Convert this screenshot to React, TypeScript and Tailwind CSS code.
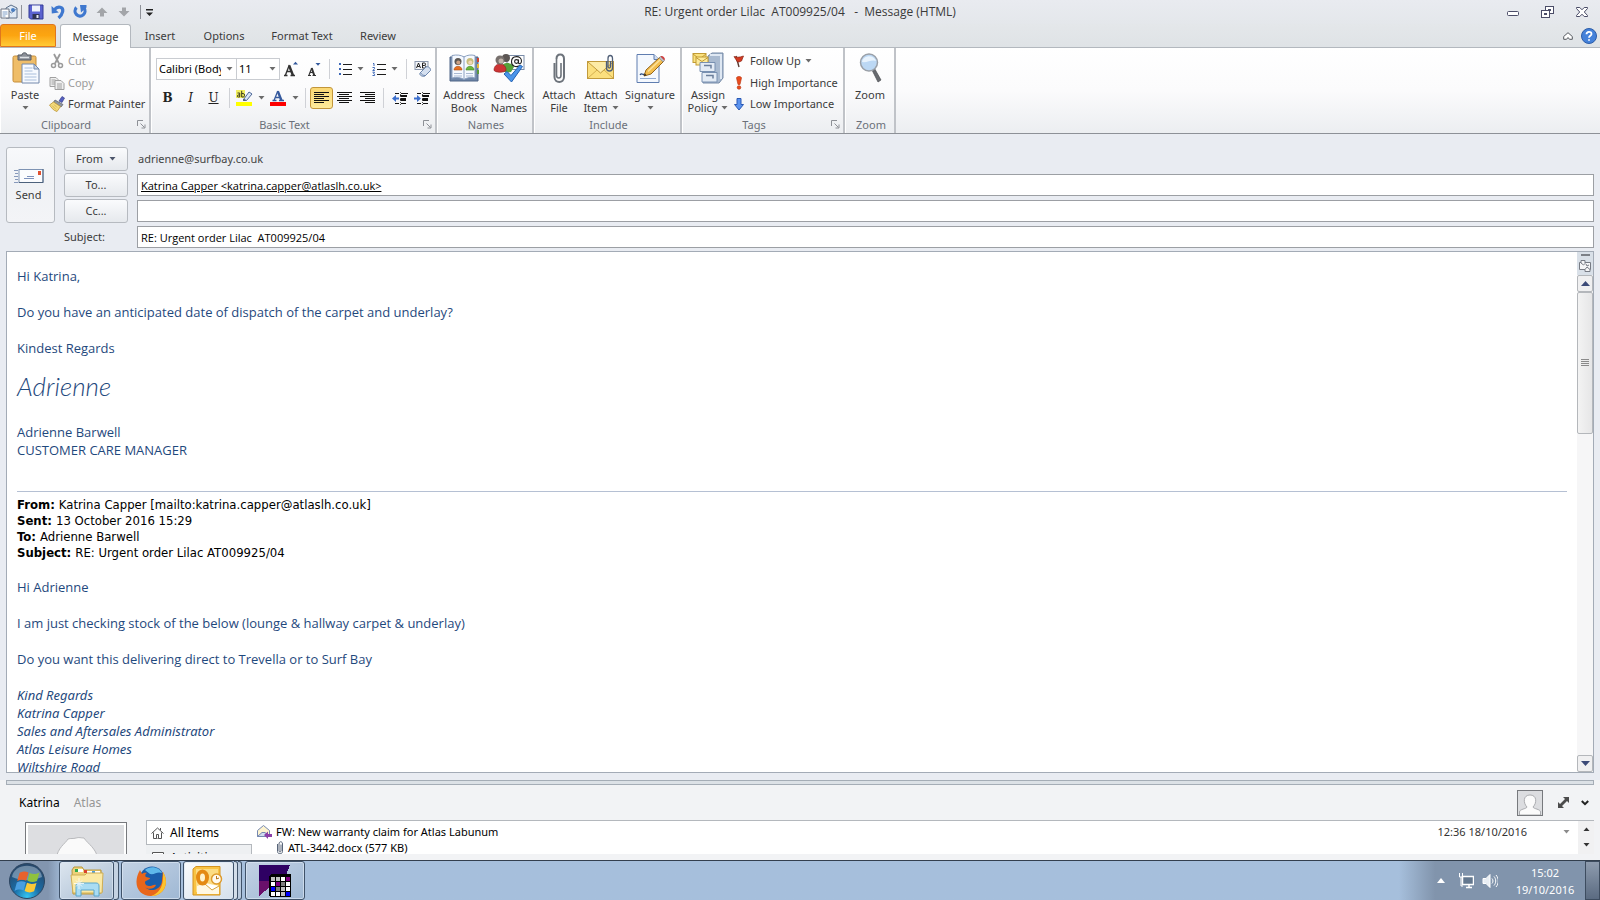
import type { ReactNode } from "react";
import clsx from "clsx";

type IconProps = { className?: string };

const Caret = ({ className = "text-[#6b6b6b]" }: IconProps) => (
  <svg viewBox="0 0 7 4" className={clsx("h-[4px] w-[7px] shrink-0", className)} aria-hidden="true">
    <path d="M0.5 0h6L3.5 3.6z" fill="currentColor" />
  </svg>
);

/* ---------- quick access icons ---------- */

const AppIcon = () => (
  <svg viewBox="0 0 18 16" className="h-4 w-[18px]">
    <path d="M6 4 11 1l6 3v10H6z" fill="#dfe9f5" stroke="#5c6f88" />
    <path d="M6 5l5.500 4L17 4.500" fill="none" stroke="#6d86a8" />
    <path d="M1 5h8v9H1z" fill="#fff" stroke="#6c7583" />
    <path d="M2.500 8h5M2.500 10h5M2.500 12h3" stroke="#7f9fc8" />
    <circle cx="13" cy="6" r="2" fill="#4a7ec0" />
  </svg>
);

const SaveIcon = () => (
  <svg viewBox="0 0 16 16" className="size-4">
    <path d="M1 1h14v14H2.500L1 13.500z" fill="#5a62cf" stroke="#333b96" />
    <path d="M4 1.500h8v6H4z" fill="#eef2fb" />
    <path d="M4.500 10h7v5h-7z" fill="#2f3452" />
    <path d="M8.500 11h2v3h-2z" fill="#e6e9f5" />
  </svg>
);

const UndoIcon = () => (
  <svg viewBox="0 0 16 16" className="size-4">
    <path d="M4.500 5.500C8 1.500 13.500 3 12.700 7.500c-.5 2.800-2.200 4.800-4.200 6.500" fill="none" stroke="#3f78cf" strokeWidth="3.200" />
    <path d="M1.500 2l.3 7.500 7-1z" fill="#3f78cf" />
  </svg>
);

const RedoIcon = () => (
  <svg viewBox="0 0 16 16" className="size-4">
    <path d="M4.500 3.500a5 5 0 1 0 7.500.5" fill="none" stroke="#3f78cf" strokeWidth="3.200" />
    <path d="M8 1h6.500v2.500L9 8.500z" fill="#3f78cf" />
  </svg>
);

const GrayArrow = ({ down = false }: { down?: boolean }) => (
  <svg viewBox="0 0 12 10" className={clsx("h-[10px] w-3", down && "rotate-180")}>
    <path d="M6 .5 11.500 6H8v3.500H4V6H.5z" fill="#a3a5a9" />
  </svg>
);

/* ---------- ribbon icons ---------- */

const PasteIcon = () => (
  <svg viewBox="0 0 32 32" className="size-8">
    <rect x="4" y="4" width="23" height="26" rx="1.500" fill="#efbd68" stroke="#c58d38" />
    <path d="M9 3h4c0-3 5-3 5 0h4v5H9z" fill="#8b9098" stroke="#555b64" />
    <path d="M11 5.500h9" stroke="#dfe2e6" strokeWidth="1.500" />
    <path d="M13 12h12l5 5v14H13z" fill="#f7faff" stroke="#7288ab" />
    <path d="M25 12v5h5z" fill="#c9d7ea" stroke="#7288ab" />
    <path d="M15.500 16h8M15.500 19h8M15.500 22h12M15.500 25h12M15.500 28h12" stroke="#a9bedb" />
  </svg>
);

const CutIcon = () => (
  <svg viewBox="0 0 16 16" className="size-4" fill="none" stroke="#9a9a9a">
    <path d="M5 1l5 9.500M11 1L6 10.500" strokeWidth="1.800" />
    <circle cx="4.500" cy="12.500" r="2" strokeWidth="1.500" />
    <circle cx="11.500" cy="12.500" r="2" strokeWidth="1.500" />
  </svg>
);

const CopyIcon = () => (
  <svg viewBox="0 0 16 16" className="size-4" fill="#efefef" stroke="#a0a0a0">
    <path d="M1 2.500h6l2 2v7H1z" />
    <path d="M2.500 5h4M2.500 7h4M2.500 9h4" />
    <path d="M6 5.500h6l3 3v6H6z" />
    <path d="M8 9h5M8 11h5M8 13h5" />
  </svg>
);

const PainterIcon = () => (
  <svg viewBox="0 0 16 16" className="size-4">
    <path d="M10 5l3-4.500L15.500 2 13 6.500z" fill="#5560c0" stroke="#39418b" strokeWidth=".7" />
    <path d="M6 4l8 4.500-2 2.500-8-4z" fill="#8e959f" stroke="#535a64" strokeWidth=".7" />
    <path d="M4.500 6L11.500 10.500 8 15.500C4 14.500 2 11 .5 9z" fill="#f5dc7d" stroke="#bb9433" strokeWidth=".8" />
    <path d="M3 9.500l4 4M5 8.500l3 3" stroke="#c8a344" strokeWidth=".7" />
  </svg>
);

const GrowFont = () => (
  <svg viewBox="0 0 16 16" className="size-4">
    <path d="M1 14.500h3.500M7.500 14.500h4.500M2.500 14L6.300 4M5.800 4l4 10.500M4 10.500h4.500" stroke="#333" strokeWidth="1.400" fill="none" />
    <path d="M6.200 4.500l3.800 10" stroke="#333" strokeWidth="2.400" />
    <path d="M10 3.500h5L12.500.8z" fill="#33599c" />
  </svg>
);

const ShrinkFont = () => (
  <svg viewBox="0 0 16 16" className="size-4">
    <path d="M2 14.500h3M6.500 14.500H10M3 14l2.800-7M4 11.500h4" stroke="#333" strokeWidth="1.200" fill="none" />
    <path d="M5.700 7l2.600 7.500" stroke="#333" strokeWidth="2" />
    <path d="M9.500 2h5L12 4.700z" fill="#33599c" />
  </svg>
);

const BulletsIcon = () => (
  <svg viewBox="0 0 14 14" className="size-[14px]" shapeRendering="crispEdges">
    <path d="M5 2.500h9M5 7.500h9M5 12.500h9" stroke="#1d1d1d" />
    <path d="M1 1h2v2H1zM1 6h2v2H1zM1 11h2v2H1z" fill="#3c67b8" />
  </svg>
);

const NumberingIcon = () => (
  <svg viewBox="0 0 14 14" className="size-[14px]">
    <path d="M5 2.500h9M5 7.500h9M5 12.500h9" stroke="#1d1d1d" shapeRendering="crispEdges" />
    <path d="M1 1.500h1V4M.5 5.500h2v1.200L.8 8.500h2M.5 10.200h2L1.600 11.700l1 .6v1.200H.5" fill="none" stroke="#3c67b8" />
  </svg>
);

const ClearFormatIcon = () => (
  <svg viewBox="0 0 18 16" className="h-4 w-[18px]">
    <rect x="1" y=".5" width="13" height="8" fill="#f4f6fa" stroke="#8b98ad" />
    <path d="M2.500 7L4.500 2l2 5M3.200 5.500h2.600M8.500 2v5h2.200c1.600 0 1.600-2.500 0-2.500H8.500M8.500 2h2c1.400 0 1.400 2.300 0 2.300" fill="none" stroke="#222" />
    <path d="M6 12l6-6c2-1 5 1 4.500 3.500L11 15c-3 1-6-1-5-3z" fill="#d5e0f0" stroke="#6b85ad" />
    <path d="M6.500 11.500c1 2 2.500 3 4.500 3" fill="none" stroke="#6b85ad" />
  </svg>
);

const HighlightIcon = () => (
  <svg viewBox="0 0 17 16" className="h-4 w-[17px]">
    <rect x="0" y="0" width="9" height="8" fill="#f2ef5e" />
    <path d="M1.500 3h2.200v4M3.700 5H2.200C1 5.300 1 7 2.300 7h1.400M5.700.8V7h1.500C9 7 9 3.500 7.200 3.500H5.700" fill="none" stroke="#3a3a1e" />
    <path d="M7.500 9.500L13 2l3 2-5.500 6.500z" fill="#dbe6f5" stroke="#4d6798" />
    <path d="M7 11l.5-2 3 1.500z" fill="#3b4b66" />
    <rect x="0" y="12" width="16" height="4" fill="#ffff00" />
  </svg>
);

const FontColorIcon = () => (
  <svg viewBox="0 0 17 16" className="h-4 w-[17px]">
    <path d="M2.500 10.500h4M9 10.500h5M4 10.500L7.800 1M5.500 7.500h5" fill="none" stroke="#35599d" strokeWidth="1.300" />
    <path d="M7.800 1.200l3.700 9.300" stroke="#35599d" strokeWidth="2.400" />
    <rect x="0" y="12" width="16" height="4" fill="#fe0000" />
  </svg>
);

const AlignIcon = ({ d }: { d: string }) => (
  <svg viewBox="0 0 15 13" className="h-[13px] w-[15px]" shapeRendering="crispEdges">
    <path d={d} stroke="#111" />
  </svg>
);

const IndentIcon = ({ out = false }: { out?: boolean }) => (
  <svg viewBox="0 0 16 13" className="h-[13px] w-4" shapeRendering="crispEdges">
    <path d="M3 1.500h4M9 1.500h7M9 4.500h4M9 8.500h5M3 11.500h4M9 11.500h5" stroke="#111" />
    <path d="M8 3.500h7M8 6.500h6" stroke="#111" strokeWidth="2" />
    <path d="M8.500 0v13" stroke="#555" strokeDasharray="1 1" />
    <path d={out ? "M0 6.500L4 3v2.500h3v2H4V10z" : "M7 6.500L3 3v2.500H0v2h3V10z"} fill="#3c6fce" shapeRendering="auto" />
  </svg>
);

const AddressBookIcon = () => (
  <svg viewBox="0 0 32 32" className="size-8">
    <path d="M2 5h28v24H2z" fill="#6f86a8" stroke="#4e6486" />
    <path d="M4 3.500c5-1 9-.5 12 1.500 3-2 7-2.500 11-1.500V26c-4-1-8-.5-11 1.500-3-2-7-2.500-12-1.500z" fill="#f5f9ff" stroke="#8ba0c0" />
    <path d="M16 5v22" stroke="#8ba0c0" />
    <path d="M6 18c0-5 8-5 8 0z" fill="#e56f22" stroke="#a84a10" strokeWidth=".6" />
    <circle cx="10" cy="9.500" r="3.500" fill="#5b5652" />
    <circle cx="10.300" cy="10.500" r="2" fill="#caa084" />
    <path d="M18 18c0-5 8-5 8 0z" fill="#6cb63c" stroke="#3f8321" strokeWidth=".6" />
    <circle cx="22" cy="9.500" r="3.500" fill="#c9bd7a" />
    <circle cx="22.300" cy="10.500" r="2" fill="#f0d6b6" />
    <path d="M6 21.500h8M6 24h8M18 21.500h7M18 24h7" stroke="#a9b9d2" />
    <path d="M29 6h2v4h-2z" fill="#d0432f" />
    <path d="M29 12h2v4h-2z" fill="#e6b93b" />
    <path d="M29 18h2v4h-2z" fill="#5b9a3b" />
  </svg>
);

const CheckNamesIcon = () => (
  <svg viewBox="0 0 32 32" className="size-8">
    <rect x="14" y="3.500" width="17" height="14" fill="#fff" stroke="#7b8da9" />
    <path d="M8 17c0-8 12-7 13-2l-3 5c-4 1-8 0-10-3z" fill="#55a23b" />
    <circle cx="13" cy="6" r="4" fill="#5c5654" />
    <path d="M1 18c0-8 12-8 12 0 0 3-12 3-12 0z" fill="#cd3434" stroke="#8f1d1d" strokeWidth=".6" />
    <circle cx="7" cy="8" r="4.500" fill="#77706d" />
    <circle cx="8" cy="9" r="2.500" fill="#c2b5ab" />
    <circle cx="23.500" cy="9.500" r="1.900" fill="none" stroke="#222" strokeWidth="1.100" />
    <path d="M25.500 7.500v3c0 2 3 1.500 3-1.500 0-6-10-6-10 .8 0 5 5 5.500 8 4" fill="none" stroke="#222" strokeWidth="1.100" />
    <path d="M11 22l3-2.500 4 4L27 13l2.500 1.500L18.500 30z" fill="#4b95ea" stroke="#2362b4" />
  </svg>
);

const AttachFileIcon = () => (
  <svg viewBox="0 0 32 32" className="size-8" fill="none" stroke="#6d737b">
    <path d="M11.500 11v14c0 6.500 9.500 6.500 9.500 0V7c0-6-7.500-6-7.500 0" strokeWidth="2" />
    <path d="M13.500 7v16c0 4 4.500 4 4.500 0V11" strokeWidth="1.600" />
  </svg>
);

const AttachItemIcon = () => (
  <svg viewBox="0 0 32 32" className="size-8">
    <rect x="2.500" y="9.500" width="26" height="17" fill="#fbdf7e" stroke="#c19a3c" />
    <path d="M3 26l9-8M28 26l-9-8" stroke="#d5b050" />
    <path d="M3 10l12.500 11L28 10" fill="#fdeba6" stroke="#c19a3c" />
    <path d="M21.500 9v7c0 4 6 4 6 0V6.500c0-4-4.500-4-4.500 0v8c0 2 2.500 2 2.500 0V9" fill="none" stroke="#4f5e76" strokeWidth="1.300" />
  </svg>
);

const SignatureIcon = () => (
  <svg viewBox="0 0 32 32" className="size-8">
    <path d="M3 2.500h17l5 5v23H3z" fill="#f4f8fe" stroke="#5f7db0" />
    <path d="M20 2.500v5h5" fill="#d0def2" stroke="#5f7db0" />
    <path d="M6 26.500h16" stroke="#90aad3" />
    <path d="M6 23c2-3 3 1 5-1" fill="none" stroke="#27487f" strokeWidth="1.300" />
    <path d="M10 24l2-6L26 5l4 4-13 13z" fill="#f2bd4e" stroke="#94651c" />
    <path d="M14 19.500L27.500 6.500" stroke="#fbe29c" strokeWidth="1.500" />
    <path d="M25 6l1.500-1.500 4 4L29 10z" fill="#b8bec7" stroke="#777" strokeWidth=".5" />
    <path d="M26.500 4.500C28 3 32 6 30.500 8.500z" fill="#cf4040" />
    <path d="M10 24l.8-2.500 1.800 1.800z" fill="#222" />
  </svg>
);

const AssignPolicyIcon = () => (
  <svg viewBox="0 0 32 32" className="size-8">
    <path d="M16 4l4-3h11v25l-4 5H11V12h5z" fill="#a9bad0" stroke="#7489a6" />
    <path d="M18 3h11v24" fill="none" stroke="#dfe8f3" strokeWidth="2" />
    <rect x="1" y="1.500" width="13" height="9" fill="#fbe27f" stroke="#c29b35" />
    <path d="M1 2l6.500 5L14 2" fill="none" stroke="#c29b35" />
    <rect x="4" y="5" width="12" height="8" fill="#fdeb9c" stroke="#c29b35" />
    <path d="M4 5.500l6 4 6-4" fill="none" stroke="#c29b35" />
    <path d="M8 10.500h15v9H8z" fill="#e3ebf5" stroke="#7890b1" />
    <path d="M10 20.500h15v9.500H10z" fill="#e3ebf5" stroke="#7890b1" />
    <path d="M12 13.500h7v3M14 23.500h7v3" fill="none" stroke="#6b7f9c" strokeWidth="1.500" />
  </svg>
);

const ZoomIcon = () => (
  <svg viewBox="0 0 32 32" className="size-8">
    <path d="M18 18l2.500-1.500L27 28l-3 2z" fill="#686b70" stroke="#4b4d52" strokeWidth=".7" />
    <circle cx="15" cy="10.500" r="8.500" fill="#bcd8f4" stroke="#9aa0a8" strokeWidth="1.500" />
    <path d="M8 10c1-7 12-8 14-1-4-2-9 2-14 1z" fill="#e8f3fd" />
  </svg>
);

const FlagIcon = () => (
  <svg viewBox="0 0 12 14" className="mr-[2px] h-[14px] w-3">
    <path d="M3 2l3 11" stroke="#5a3a32" strokeWidth="1.400" />
    <path d="M1 2.500C4 3.500 6 3.500 10.500 2L8.500 7C7 8 5 8 4.500 8z" fill="#d23a22" stroke="#8d2313" strokeWidth=".7" />
  </svg>
);

const HighIcon = () => (
  <svg viewBox="0 0 12 14" className="mr-[2px] h-[14px] w-3">
    <path d="M3.500 2c0-2 5-2 5 0L7 8.500H5z" fill="#ea4b1c" stroke="#b5330e" strokeWidth=".6" />
    <circle cx="6" cy="11.500" r="1.800" fill="#ea4b1c" stroke="#b5330e" strokeWidth=".6" />
  </svg>
);

const LowIcon = () => (
  <svg viewBox="0 0 12 14" className="mr-[2px] h-[14px] w-3">
    <path d="M4 1.500h4v6h2.500L6 13 1.500 7.500H4z" fill="#5b93ee" stroke="#2a59b5" />
  </svg>
);

/* ---------- ribbon building blocks ---------- */

const Launcher = () => (
  <button type="button" aria-label="More options" className="-ml-2 size-[10px]">
    <svg viewBox="0 0 9 9" className="size-[9px]" fill="none" stroke="#8d9096">
      <path d="M.5 6V.5H6M3.500 3.500l4 4M8 4.500V8H4.500" />
    </svg>
  </button>
);

function Group({ label, width, launcher, children }: { label: string; width: string; launcher?: boolean; children: ReactNode }) {
  return (
    <section className={clsx("flex flex-col border-r-2 border-[#c0c3c8] border-l border-l-white", width)}>
      <div className="flex h-[67px]">{children}</div>
      <div className={clsx("flex h-[18px] items-center", launcher ? "pr-[2px]" : "pl-[2px]")}>
        <h2 className={clsx("flex-1 pt-px text-center text-[#6b7079]", launcher && "pr-[14px]")}>{label}</h2>
        {launcher && <Launcher />}
      </div>
    </section>
  );
}

function BigButton({ icon, label, second, caret, width }: { icon: ReactNode; label: string; second?: string; caret?: boolean; width: string }) {
  return (
    <button type="button" className={clsx("flex shrink-0 flex-col items-center pt-1 leading-[13px] whitespace-nowrap", width)}>
      {icon}
      <span className="mt-1">{label}</span>
      <span className="flex h-[13px] items-center gap-1">
        {second}
        {caret && <Caret />}
      </span>
    </button>
  );
}

function SmallButton({ icon, label, disabled, caret }: { icon: ReactNode; label: string; disabled?: boolean; caret?: boolean }) {
  return (
    <button type="button" disabled={disabled} className="flex h-[22px] items-center gap-[3px] whitespace-nowrap disabled:text-[#9b9b9b]">
      {icon}
      <span className="mr-px">{label}</span>
      {caret && <Caret />}
    </button>
  );
}

function Tool({ label, width = "w-[23px]", caret, active, children }: { label: string; width?: string; caret?: boolean; active?: boolean; children: ReactNode }) {
  return (
    <button
      type="button"
      aria-label={label}
      aria-pressed={active}
      className={clsx(
        "flex h-[22px] shrink-0 items-center justify-center gap-[5px]",
        width,
        active && "rounded-[3px] border border-[#c2963a] bg-linear-to-b from-[#fbd873] to-[#fdea9a]",
      )}
    >
      {children}
      {caret && <Caret />}
    </button>
  );
}

const Divider = () => <span className="mx-1 h-[20px] w-px shrink-0 bg-[#cfd1d6]" />;

function Combo({ label, value, width }: { label: string; value: string; width: string }) {
  return (
    <span className={clsx("relative -mr-px flex h-[22px] items-center", width)}>
      <select aria-label={label} className="h-full w-full appearance-none border border-[#c9ccd1] bg-white pr-[15px] pl-[2px] text-black">
        <option>{value}</option>
      </select>
      <span className="pointer-events-none absolute right-1">
        <Caret />
      </span>
    </span>
  );
}

function TitleBar() {
  return (
    <header className="grid h-6 grid-cols-[1fr_auto_1fr] items-center bg-linear-to-b from-[#e9ebf0] to-[#e4e7eb]">
      <div className="flex items-center gap-[6px]">
        <button type="button" aria-label="System menu"><AppIcon /></button>
        <span className="-ml-[3px] h-[14px] w-px bg-[#8f9299]" />
        <button type="button" aria-label="Save"><SaveIcon /></button>
        <button type="button" aria-label="Undo"><UndoIcon /></button>
        <button type="button" aria-label="Redo"><RedoIcon /></button>
        <button type="button" aria-label="Previous item" className="ml-[2px]"><GrayArrow /></button>
        <button type="button" aria-label="Next item" className="ml-1"><GrayArrow down /></button>
        <span className="ml-1 h-[14px] w-px bg-[#8f9299]" />
        <button type="button" aria-label="Customize toolbar" className="-ml-[2px]">
          <svg viewBox="0 0 9 7" className="h-[7px] w-[9px]">
            <path d="M1 0h7v1.500H1zM1 3.500h7L4.500 7z" fill="#222" />
          </svg>
        </button>
      </div>
      <h1 className="font-['Open_Sans','Noto_Sans',sans-serif] text-[12px] whitespace-pre text-[#3a3a3a]">{"RE: Urgent order Lilac  AT009925/04   -  Message (HTML)"}</h1>
      <div className="flex items-center justify-end gap-[22px] pr-3">
        <button type="button" aria-label="Minimize">
          <svg viewBox="0 0 12 12" className="size-3" fill="#fff" stroke="#4b4d68">
            <rect x=".5" y="5.500" width="11" height="4" rx="1" />
          </svg>
        </button>
        <button type="button" aria-label="Restore">
          <svg viewBox="0 0 13 12" className="h-3 w-[13px]" fill="#fff" stroke="#4b4d68">
            <rect x="4.500" y=".5" width="8" height="7" />
            <rect x="7.500" y="3.500" width="2" height="1" />
            <rect x=".5" y="4.500" width="8" height="7" />
            <rect x="3.500" y="7.500" width="2" height="1" />
          </svg>
        </button>
        <button type="button" aria-label="Close">
          <svg viewBox="0 0 12 12" className="size-3" fill="#fff" stroke="#4b4d68">
            <path d="M.5 1.500h3.300L6 3.800l2.200-2.300h3.300v1L8.300 6l3.200 3.500v1H8.200L6 8.200l-2.200 2.300H.5v-1L3.700 6 .5 2.500z" />
          </svg>
        </button>
      </div>
    </header>
  );
}

const TABS = [
  { name: "Insert", width: "w-[58px]" },
  { name: "Options", width: "w-[70px]" },
  { name: "Format Text", width: "w-[86px]" },
  { name: "Review", width: "w-[66px]" },
];

function Tabs() {
  return (
    <nav className="flex h-6 border-b border-[#b3b8be] bg-linear-to-b from-[#e4e7ea] to-[#dfe3e6]">
      <button type="button" className="h-[23px] w-[56px] rounded-t-[3px] border border-[#e0761d] bg-linear-to-b from-[#f59a12] via-[#fca510] to-[#ffcb35] text-white">
        File
      </button>
      <button type="button" className="ml-1 h-6 w-[71px] rounded-t-[3px] border border-b-0 border-[#b3b8be] bg-white">Message</button>
      {TABS.map((tab) => (
        <button key={tab.name} type="button" className={clsx("h-[23px]", tab.width)}>{tab.name}</button>
      ))}
      <div className="ml-auto flex items-center gap-2 pr-[3px]">
        <button type="button" aria-label="Minimize the ribbon">
          <svg viewBox="0 0 10 8" className="h-2 w-[10px]">
            <path d="M.7 4.500L5 .7l4.300 3.800v2.800H6.500L5 5.500 3.500 7.300H.7z" fill="#fff" stroke="#55595f" />
          </svg>
        </button>
        <button type="button" aria-label="Help">
          <svg viewBox="0 0 16 16" className="size-4">
            <circle cx="8" cy="8" r="7.500" fill="#4582da" stroke="#2c5da8" />
            <path d="M5.500 6.300c0-3.300 5-3.300 5-.3 0 1.700-2.500 1.800-2.500 3.700M8 11.200v1.600" fill="none" stroke="#fff" strokeWidth="1.800" />
          </svg>
        </button>
      </div>
    </nav>
  );
}

function Ribbon() {
  return (
    <div className="flex h-[86px] border-b border-[#8d9197] bg-linear-to-b from-white via-[#fbfbfc] to-[#eceef1]">
      <Group label="Clipboard" width="w-[151px]" launcher>
        <BigButton width="w-[48px]" icon={<PasteIcon />} label="Paste" caret />
        <div className="flex flex-col pt-[2px]">
          <SmallButton icon={<CutIcon />} label="Cut" disabled />
          <SmallButton icon={<CopyIcon />} label="Copy" disabled />
          <SmallButton icon={<PainterIcon />} label="Format Painter" />
        </div>
      </Group>

      <Group label="Basic Text" width="w-[286px]" launcher>
        <div className="flex flex-col gap-[7px] pt-[10px] pl-1">
          <div className="flex items-center">
            <Combo label="Font" value="Calibri (Body)" width="w-[81px]" />
            <Combo label="Font size" value="11" width="w-[44px]" />
            <Tool label="Grow font" width="w-6"><GrowFont /></Tool>
            <Tool label="Shrink font" width="w-[22px]"><ShrinkFont /></Tool>
            <Divider />
            <Tool label="Bullets" width="w-[34px]" caret><BulletsIcon /></Tool>
            <Tool label="Numbering" width="w-[34px]" caret><NumberingIcon /></Tool>
            <Divider />
            <Tool label="Clear formatting"><ClearFormatIcon /></Tool>
          </div>
          <div className="flex items-center font-['DejaVu_Serif',serif] text-[12px] text-[#222]">
            <Tool label="Bold"><b>B</b></Tool>
            <Tool label="Italic"><i>I</i></Tool>
            <Tool label="Underline"><u>U</u></Tool>
            <Divider />
            <Tool label="Highlight" width="w-[33px]" caret><HighlightIcon /></Tool>
            <Tool label="Font color" width="w-[34px]" caret><FontColorIcon /></Tool>
            <Divider />
            <Tool label="Align left" active><AlignIcon d="M0 .5h15M0 2.500h10M0 4.500h15M0 6.500h10M0 8.500h15M0 10.500h10" /></Tool>
            <Tool label="Center"><AlignIcon d="M0 .5h15M2 2.500h10M0 4.500h15M2 6.500h10M0 8.500h15M2 10.500h10" /></Tool>
            <Tool label="Align right"><AlignIcon d="M0 .5h15M5 2.500h10M0 4.500h15M5 6.500h10M0 8.500h15M5 10.500h10" /></Tool>
            <Divider />
            <Tool label="Decrease indent"><IndentIcon out /></Tool>
            <Tool label="Increase indent" width="w-[22px]"><IndentIcon /></Tool>
          </div>
        </div>
      </Group>

      <Group label="Names" width="w-[97px]">
        <div className="flex pl-[3px]">
          <BigButton width="w-[46px]" icon={<AddressBookIcon />} label="Address" second="Book" />
          <BigButton width="w-[44px]" icon={<CheckNamesIcon />} label="Check" second="Names" />
        </div>
      </Group>

      <Group label="Include" width="w-[148px]">
        <div className="flex pl-[3px]">
          <BigButton width="w-[42px]" icon={<AttachFileIcon />} label="Attach" second="File" />
          <BigButton width="w-[42px]" icon={<AttachItemIcon />} label="Attach" second="Item" caret />
          <BigButton width="w-[56px]" icon={<SignatureIcon />} label="Signature" caret />
        </div>
      </Group>

      <Group label="Tags" width="w-[163px]" launcher>
        <BigButton width="w-[50px]" icon={<AssignPolicyIcon />} label="Assign" second="Policy" caret />
        <div className="flex flex-col pt-[2px]">
          <SmallButton icon={<FlagIcon />} label="Follow Up" caret />
          <SmallButton icon={<HighIcon />} label="High Importance" />
          <SmallButton icon={<LowIcon />} label="Low Importance" />
        </div>
      </Group>

      <Group label="Zoom" width="w-[51px]">
        <BigButton width="w-[48px]" icon={<ZoomIcon />} label="Zoom" />
      </Group>
    </div>
  );
}

/* ---------- message header ---------- */

const fieldButton = "flex h-6 items-center justify-center gap-[6px] rounded-[3px] border border-[#b6bac0] bg-linear-to-b from-[#fafbfd] to-[#e6e9ed]";
const fieldInput = "h-[22px] w-full min-w-0 border border-[#9c9fa4] bg-white px-[3px] font-['Open_Sans','Noto_Sans',sans-serif] text-black outline-none";

function Envelope() {
  return (
    <form className="grid grid-cols-[49px_64px_1fr] grid-rows-[repeat(4,26px)] items-center gap-x-[9px] bg-[#e9ecf2] px-[6px] pt-3">
      <button type="button" className="row-span-3 flex h-[76px] flex-col items-center justify-center gap-1 rounded-[3px] border border-[#b6bac0] bg-linear-to-b from-[#f8f9fb] via-[#f0f2f5] to-[#f3f4f7] pr-1 leading-[14px]">
        <svg viewBox="0 0 30 16" className="h-4 w-[30px]">
          <path d="M0 2.500h4M1 5.500h3M0 8.500h4M1 11.500h3M0 14.500h4" stroke="#8799bb" />
          <rect x="5" y="1.500" width="24" height="13" fill="#fbfcfe" stroke="#7e93b3" />
          <path d="M5 14.500h24V1" fill="none" stroke="#4d627c" />
          <rect x="24" y="3" width="3" height="4" fill="#e0502f" />
          <path d="M13 8.500h7M10 10.500h10" stroke="#7d92bd" />
        </svg>
        Send
      </button>
      <button type="button" className={fieldButton}>From <Caret className="text-[#4c556b]" /></button>
      <output className="pl-[1px] text-[#444]">adrienne@surfbay.co.uk</output>
      <button type="button" className={fieldButton}>To...</button>
      <input aria-label="To" className={clsx(fieldInput, "underline")} defaultValue="Katrina Capper <katrina.capper@atlaslh.co.uk>" />
      <button type="button" className={fieldButton}>Cc...</button>
      <input aria-label="Cc" className={fieldInput} />
      <label htmlFor="subject" className="col-start-2">Subject:</label>
      <input id="subject" className={fieldInput} defaultValue="RE: Urgent order Lilac  AT009925/04" />
    </form>
  );
}

/* ---------- message body ---------- */

const QUOTED = [
  ["From:", "Katrina Capper [mailto:katrina.capper@atlaslh.co.uk]"],
  ["Sent:", "13 October 2016 15:29"],
  ["To:", "Adrienne Barwell"],
  ["Subject:", "RE: Urgent order Lilac AT009925/04"],
];

const SIGNATURE = ["Kind Regards", "Katrina Capper", "Sales and Aftersales Administrator", "Atlas Leisure Homes", "Wiltshire Road"];

function ScrollArrow({ down = false }: { down?: boolean }) {
  return (
    <button type="button" aria-label={down ? "Scroll down" : "Scroll up"} className="flex h-[17px] shrink-0 items-center justify-center rounded-[2px] border border-[#b4b7bb] bg-[#f0f0f1]">
      <svg viewBox="0 0 9 5" className={clsx("h-[5px] w-[9px]", down && "rotate-180")}>
        <path d="M4.500 0L9 5H0z" fill="#3c4b78" />
      </svg>
    </button>
  );
}

function MessageBody() {
  return (
    <div className="min-h-0 flex-1 bg-[#e9ecf2] px-[6px] pt-px pb-[7px]">
      <div className="flex h-full border border-[#a3abb6] bg-white">
        <article className="min-w-0 flex-1 overflow-hidden pt-[15px] pr-[10px] pl-[10px] font-['Open_Sans','Noto_Sans',sans-serif] text-[13px] leading-[18px] text-[#1f497d]">
          <div className="flex flex-col gap-[18px]">
            <p>Hi Katrina,</p>
            <p>Do you have an anticipated date of dispatch of the carpet and underlay?</p>
            <p>Kindest Regards</p>
          </div>
          <p className="pt-[10px] pb-[18px] font-['Lato',cursive] text-[26px] leading-[38px] font-light italic">Adrienne</p>
          <p>Adrienne Barwell</p>
          <p>CUSTOMER CARE MANAGER</p>
          <hr className="mt-[32px] border-[#b5c0d3]" />
          <dl className="pt-[5px] pb-[17px] font-['DejaVu_Sans_Condensed','DejaVu_Sans',sans-serif] text-[13px] leading-4 text-black">
            {QUOTED.map(([name, value]) => (
              <div key={name} className="flex gap-1">
                <dt className="font-bold">{name}</dt>
                <dd>{value}</dd>
              </div>
            ))}
          </dl>
          <div className="flex flex-col gap-[18px]">
            <p>Hi Adrienne</p>
            <p>I am just checking stock of the below (lounge &amp; hallway carpet &amp; underlay)</p>
            <p>Do you want this delivering direct to Trevella or to Surf Bay</p>
            <address className="font-['Noto_Sans','Open_Sans',sans-serif]">
              {SIGNATURE.map((line) => (
                <p key={line}>{line}</p>
              ))}
            </address>
          </div>
        </article>
        <div className="flex w-4 flex-col bg-[#f6f6f7]">
          <div className="flex h-[23px] flex-col items-center gap-1 bg-[#d9e0e8] pt-[2px]">
            <span className="h-[2px] w-[9px] bg-[#7c8087]" />
            <svg viewBox="0 0 13 12" className="h-3 w-[13px]" fill="#f5f5f7" stroke="#777b84">
              <path d="M.5 2.500h11v7H.5z" />
              <path d="M2 .5h4v3L4.500 5 2 3zM6 9.500L8 7l3 2.500v2H6zM7 4l1 2 2-1" />
            </svg>
          </div>
          <ScrollArrow />
          <div className="flex h-[142px] shrink-0 items-center justify-center rounded-[2px] border border-[#b4b7bb] bg-linear-to-r from-[#f3f3f3] to-[#e6e6e7]">
            <svg viewBox="0 0 8 8" className="size-2" shapeRendering="crispEdges">
              <path d="M0 .5h8M0 2.500h8M0 4.500h8M0 6.500h8" stroke="#8a8a8a" />
            </svg>
          </div>
          <div className="flex-1" />
          <ScrollArrow down />
        </div>
      </div>
    </div>
  );
}

/* ---------- people pane ---------- */

const Silhouette = ({ className }: IconProps) => (
  <svg viewBox="0 0 24 24" className={className}>
    <path d="M0 0h24v24H0z" fill="#dcdde0" />
    <path d="M1.500 24v-3c0-3 7-3 7.500-5-4-4-4-12 3-12s7 8 3 12c.5 2 7.500 2 7.500 5v3z" fill="#fbfbfb" stroke="#9a9c9f" strokeWidth=".8" />
  </svg>
);

function PeoplePane() {
  return (
    <aside className="flex h-20 shrink-0 flex-col bg-[#f2f3f5] pb-[6px]">
      <div className="mx-[6px] h-[5px] shrink-0 border border-[#a5adb6] bg-[#dce1e6]" />
      <div className="flex h-[35px] shrink-0 items-center pr-[11px] pl-[19px] text-[12px]">
        <span className="text-black">Katrina</span>
        <span className="ml-[14px] text-[#969696]">Atlas</span>
        <span className="ml-auto border border-[#77797d]"><Silhouette className="size-6" /></span>
        <button type="button" aria-label="Expand" className="ml-[15px]">
          <svg viewBox="0 0 11 11" className="size-[11px]" fill="#4c4c4c">
            <path d="M5 0h6v6L9 4 4 9l2 2H0V5l2 2 5-5z" />
          </svg>
        </button>
        <button type="button" aria-label="Collapse pane" className="ml-3">
          <svg viewBox="0 0 8 6" className="h-[6px] w-2">
            <path d="M.8 1L4 4.200 7.200 1" fill="none" stroke="#222" strokeWidth="2" />
          </svg>
        </button>
      </div>
      <div className="flex min-h-0 flex-1 overflow-hidden pr-[6px] pl-[25px]">
        <div className="mt-[2px] mr-[19px] h-[102px] w-[102px] shrink-0 border border-[#77797d] bg-white p-[2px]">
          <svg viewBox="0 0 96 96" className="h-full w-full">
            <path d="M0 0h96v96H0z" fill="#dddee1" />
            <path d="M28 34c2-12 9-15 12-20 3-1 5 0 8-1s5 0 8 0c4 6 12 10 14 21v60H28z" fill="#fafafa" stroke="#b9babd" />
          </svg>
        </div>
        <div className="flex w-[106px] shrink-0 flex-col text-black">
          <button type="button" className="flex h-[25px] shrink-0 items-center gap-[6px] border border-r-0 border-[#b4b8bd] bg-white pl-1 text-[12px]">
            <svg viewBox="0 0 13 12" className="h-3 w-[13px]" fill="#fff" stroke="#555">
              <path d="M2.500 5.500v6h8v-6M.5 6.500l6-5.500 6 5.500M9.500 1v2" />
              <path d="M5.500 11.500v-4h2v4" />
            </svg>
            All Items
          </button>
          <button type="button" className="flex h-[25px] shrink-0 items-center gap-[6px] border-r border-[#b4b8bd] bg-[#eef0f2] pl-[6px] text-[12px]">
            <svg viewBox="0 0 12 12" className="size-3" fill="#fff" stroke="#555"><path d="M.5.5h11v11H.5zM3 6l2 2 4-5" /></svg>
            Activities
          </button>
        </div>
        <ul className="min-w-0 flex-1 border-t border-[#b4b8bd] bg-white pt-[2px] pl-1 text-[11px] leading-4 text-black">
          <li className="flex">
            <a href="#item" className="flex items-center gap-1">
              <svg viewBox="0 0 16 14" className="h-[14px] w-4">
                <path d="M1.500 5.500l6-5 6 5v6h-12z" fill="#fdf3cf" stroke="#7588b0" />
                <path d="M1.500 11.500l4.500-4h3l4.500 4z" fill="#cfdcf0" stroke="#7588b0" />
                <path d="M8 10l4-3.500V9h4v3h-4v2z" fill="#8b3fa8" />
              </svg>
              FW: New warranty claim for Atlas Labunum
            </a>
            <time className="mr-[36px] ml-auto pt-px text-[#333]">12:36 18/10/2016</time>
            <button type="button" aria-label="Item menu" className="mr-2"><Caret className="text-[#8b8b8b]" /></button>
          </li>
          <li>
            <a href="#attachment" className="ml-5 flex items-center gap-1">
              <svg viewBox="0 0 8 14" className="h-[14px] w-2" fill="none" stroke="#586579">
                <path d="M1.500 3v7.500c0 3 5 3 5 0V3c0-3-3.500-3-3.500 0v7c0 1.300 2 1.300 2 0V3.500" />
              </svg>
              ATL-3442.docx (577 KB)
            </a>
          </li>
        </ul>
        <div className="flex w-4 shrink-0 flex-col items-center gap-3 border-t border-[#b4b8bd] bg-[#f1f1f2] pt-[6px]">
          <span className="rotate-180"><Caret className="block text-[#333]" /></span>
          <Caret className="text-[#333]" />
        </div>
      </div>
    </aside>
  );
}

/* ---------- taskbar ---------- */

const FLAG_PANES = [
  ["M11.500 11c3-2 6-2 9-.5l-2.300 8.300c-3-1.500-5.700-1.500-9 .3z", "#e8622c"],
  ["M21.500 11c3 1.500 6.500 1.500 10-.5l-2.500 8.500c-3 1.500-6 1.500-9.500-.2z", "#8fc23e"],
  ["M8.800 20.500c3.200-1.800 6-1.700 9-.2l-2.300 8.300c-3-1.500-5.500-1.300-9 .4z", "#4a9ee0"],
  ["M19 20.800c3 1.500 6 1.500 9.500.2l-2.400 8.300c-3.200 1.500-6 1.500-9.500-.2z", "#fbc937"],
];

const StartOrb = () => (
  <svg viewBox="0 0 38 38" className="size-[38px]">
    <defs>
      <radialGradient id="orb" cx=".5" cy=".95" r=".85">
        <stop offset="0" stopColor="#35c5f2" />
        <stop offset=".45" stopColor="#1a6ca5" />
        <stop offset="1" stopColor="#27496d" />
      </radialGradient>
    </defs>
    <circle cx="19" cy="19" r="17.500" fill="url(#orb)" stroke="#2d4560" />
    <path d="M4 15C6 0 32 0 34 15c-8 4-22 4-30 0z" fill="#b5c9dc" opacity=".5" />
    {FLAG_PANES.map(([d, fill]) => <path key={fill} d={d} fill={fill} />)}
  </svg>
);

const ExplorerIcon = () => (
  <svg viewBox="0 0 34 32" className="h-8 w-[34px]">
    <path d="M2 5l2-3h8l2 3h17l1 22-3 2H3z" fill="#edd27a" stroke="#b8963d" />
    <path d="M5 4h3v3H5z" fill="#2fa84b" />
    <path d="M8 4h5v3H8zM17 6h5v2h-5zM25 6h5v2h-5z" fill="#fff" />
    <path d="M14 5h3v3h-3z" fill="#d9422d" />
    <path d="M22 6h3v3h-3z" fill="#4c9fdf" />
    <path d="M1 10h14l2-2h16l-1 20H3z" fill="#fbe9a4" stroke="#cfae54" />
    <path d="M6 31V21c0-2 1-3 3-3h17c2 0 3 1 3 3v10h-5v-6H11v6z" fill="#a9dcf3" stroke="#5ba6cc" />
    <path d="M9 13v11M4 18.500h10M6 15.500l6 6M12 15.500l-6 6" stroke="#fff" opacity=".8" />
  </svg>
);

const FirefoxIcon = () => (
  <svg viewBox="0 0 32 32" className="size-8">
    <circle cx="17" cy="14" r="12.500" fill="#1b5eab" />
    <path d="M10 5c5-5 15-3 17 3-5-2-7 2-12 1z" fill="#5fb8ea" />
    <path d="M28 7c7 11 1 24-12 24C7 31 1 25 1.500 16 2 10 4 7 5 5l2 4c1-1 3-1.500 5-1-2 1-2 3-1 4l4 1c0 2-4 2-5 4 0 3 2 4 5 4 3-.5 4-2 6-1-1 4-8 5-11 2 5 6 17 3 17-7 0-3 1-5 .5-8z" fill="#e8661b" />
    <path d="M28 7c7 11 1 24-12 24 8-3 13-9 12-24z" fill="#fbc42f" />
  </svg>
);

const OutlookIcon = () => (
  <svg viewBox="0 0 32 32" className="size-8">
    <path d="M2 4L5 1.500h24V30H2z" fill="#f9c343" stroke="#d4931f" />
    <path d="M5 4h22v23H5z" fill="#fcdc83" />
    <path d="M6 21l9-3 13 3v8H6z" fill="#fff8e3" />
    <path d="M14 19l7 6 7-4" fill="#fff" stroke="#d5a23b" />
    <ellipse cx="11.500" cy="12.500" rx="4.500" ry="6" fill="#fff3cd" stroke="#e48a13" strokeWidth="4" />
    <circle cx="25.500" cy="14" r="5" fill="#fffaf0" stroke="#dd9b2d" strokeWidth="1.500" />
    <path d="M25.500 11v3l2.500-1" fill="none" stroke="#b9751a" />
  </svg>
);

const CELLS = ["#c0c0c0", "#c0c0c0", "#fff", "#800080", "#fff", "#800080", "#808080", "#fff", "#0000ff", "#808080", "#c0c0c0", "#fff", "#fff", "#fff", "#c0c0c0", "#0000ff"];

const GridAppIcon = () => (
  <svg viewBox="0 0 32 32" className="size-8" shapeRendering="crispEdges">
    <path d="M0 0h31l-5 13-14 6-11 12H0z" fill="#2e0063" />
    <path d="M0 16h11v6L0 31z" fill="#69106b" />
    <path d="M10 11l2-2h20v23H11l-1-1z" fill="#000" />
    {CELLS.map((fill, i) => (
      <rect key={i} x={12 + (i % 4) * 5} y={12 + Math.floor(i / 4) * 5} width="4" height="4" fill={fill} />
    ))}
  </svg>
);

const taskButton = "flex h-[39px] items-center justify-center rounded-[3px] border border-[#3f5269] inset-ring inset-ring-[#dce7f3]/70";

function Taskbar() {
  return (
    <footer className="flex h-10 shrink-0 items-center border-t border-[#333f4e] bg-linear-to-r from-[#8295af] from-3% via-[#a6bfdc] via-4% to-[#a6bfdc] text-white">
      <button type="button" aria-label="Start" className="ml-2"><StartOrb /></button>
      <button type="button" aria-label="Windows Explorer" className={clsx(taskButton, "ml-[13px] w-[55px] bg-linear-to-br from-[#dde6ef] to-[#a9bdd3]")}><ExplorerIcon /></button>
      <span className="h-[39px] w-[5px] rounded-r-[3px] border border-l-0 border-[#3f5269] bg-[#c4d2e2]" />
      <button type="button" aria-label="Firefox" className={clsx(taskButton, "ml-[2px] w-[60px] bg-linear-to-br from-[#c3d2e4] to-[#9fb8d4]")}><FirefoxIcon /></button>
      <button type="button" aria-label="Outlook" className={clsx(taskButton, "ml-[2px] w-[51px] bg-linear-to-br from-[#fbfcfd] to-[#d5e0ec] pr-[3px]")}><OutlookIcon /></button>
      <span className="h-[39px] w-[4px] rounded-r-[3px] border border-l-0 border-[#3f5269] bg-[#d3deea]" />
      <span className="h-[39px] w-[4px] rounded-r-[3px] border border-l-0 border-[#3f5269] bg-[#b9cade]" />
      <button type="button" aria-label="Grid application" className={clsx(taskButton, "ml-[3px] w-[60px] bg-linear-to-br from-[#c3d2e4] to-[#9fb8d4]")}><GridAppIcon /></button>
      <div className="ml-auto flex h-full items-center bg-linear-to-r from-transparent to-[#8194ac] to-18% pl-[38px]">
        <button type="button" aria-label="Show hidden icons">
          <svg viewBox="0 0 8 5" className="h-[5px] w-2"><path d="M4 0l4 5H0z" fill="#fff" /></svg>
        </button>
        <svg viewBox="0 0 16 16" className="ml-[13px] size-4" fill="none" stroke="#fff">
          <path d="M4.500 3.500h11v8h-11z" fill="#64788f" strokeWidth="1.500" />
          <path d="M8 14.500h6M11 12v3" strokeWidth="1.500" />
          <path d="M1.500 0v4h3V0M3 4v9h2" />
        </svg>
        <svg viewBox="0 0 16 16" className="ml-2 size-4" fill="none" stroke="#fff">
          <path d="M1 5.500h3l4-4v13l-4-4H1z" fill="#e8edf3" />
          <path d="M10 5.500c1.300 1.500 1.300 3.500 0 5M12 3.500c2.300 2.500 2.300 6.500 0 9M14 2c3 3.500 3 8.500 0 12" />
        </svg>
        <time className="ml-[17px] w-[60px] text-center text-[11px] leading-[17px]">
          15:02
          <br />
          19/10/2016
        </time>
        <button type="button" aria-label="Show desktop" className="ml-[10px] h-full w-[15px] border border-[#3d4c5f] bg-linear-to-b from-[#8e9caf] to-[#5b6b81]" />
      </div>
    </footer>
  );
}

export default function App() {
  return (
    <div className="flex h-screen flex-col overflow-hidden bg-[#e9ecf2] font-['Noto_Sans','Open_Sans',sans-serif] text-[11px] leading-4 text-[#3b3b3b]">
      <TitleBar />
      <Tabs />
      <Ribbon />
      <Envelope />
      <MessageBody />
      <PeoplePane />
      <Taskbar />
    </div>
  );
}
